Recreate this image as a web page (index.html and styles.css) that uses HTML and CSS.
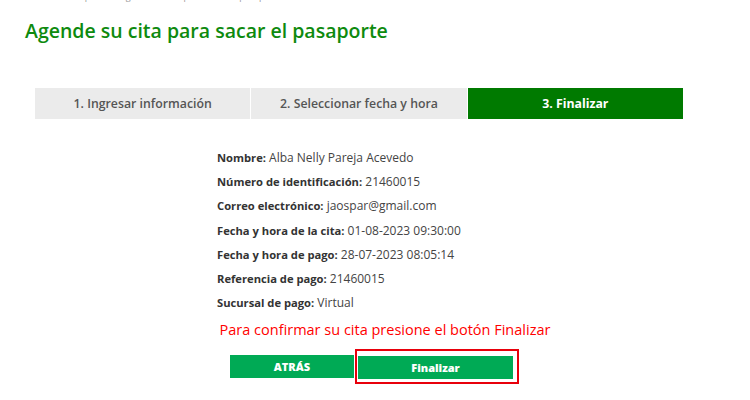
FILE: index.html
```html
<!DOCTYPE html>
<html lang="es">
<head>
<meta charset="utf-8">
<link rel="stylesheet" href="styles.css">
</head>
<body>
<div class="page">
  <div class="crumb">Inicio &nbsp;/&nbsp; Pasaporte &nbsp;/&nbsp; Agende su cita para sacar el pasaporte</div>
  <h1 class="title">Agende su cita para sacar el pasaporte</h1>
  <div class="steps">
    <div class="step">1. Ingresar información</div>
    <div class="step">2. Seleccionar fecha y hora</div>
    <div class="step active">3. Finalizar</div>
  </div>
  <div class="summary">
    <p class="row"><b>Nombre:</b> Alba Nelly Pareja Acevedo</p>
    <p class="row"><b>Número de identificación:</b> 21460015</p>
    <p class="row"><b>Correo electrónico:</b> jaospar@gmail.com</p>
    <p class="row"><b>Fecha y hora de la cita:</b> 01-08-2023 09:30:00</p>
    <p class="row"><b>Fecha y hora de pago:</b> 28-07-2023 08:05:14</p>
    <p class="row"><b>Referencia de pago:</b> 21460015</p>
    <p class="row"><b>Sucursal de pago:</b> Virtual</p>
  </div>
  <p class="notice">Para confirmar su cita presione el botón Finalizar</p>
  <div class="actions">
    <button class="btn back">ATRÁS</button>
    <div class="highlight"><button class="btn finish">Finalizar</button></div>
  </div>
</div>
</body>
</html>
```
FILE: styles.css
```css
html, body {
  margin: 0;
  padding: 0;
  background: #ffffff;
}
body {
  font-family: "Open Sans", "Liberation Sans", sans-serif;
  color: #444;
  width: 750px;
  height: 400px;
  overflow: hidden;
}
.page {
  display: flex;
  flex-direction: column;
}
.crumb {
  margin-top: -9px;
  height: 12px;
  padding-left: 30px;
  font-size: 9px;
  color: #999;
  line-height: 12px;
}
.title {
  margin: 14px 0 0 25px;
  font-size: 19.5px;
  font-weight: 600;
  color: #0e8a0e;
  line-height: 28px;
}
.steps {
  display: flex;
  gap: 1px;
  margin: 43px 0 0 35px;
  width: 648px;
}
.step {
  flex: 1;
  height: 31px;
  background: #ebebeb;
  color: #555;
  font-size: 12.3px;
  font-weight: 600;
  display: flex;
  align-items: center;
  justify-content: center;
}
.step.active {
  background: #007a00;
  color: #fff;
  font-weight: 700;
}
.summary {
  margin: 31px 0 0 217px;
  display: flex;
  flex-direction: column;
  gap: 8.2px;
}
.row {
  margin: 0;
  font-size: 12px;
  line-height: 16px;
  color: #444;
}
.row b {
  color: #333;
  font-weight: 700;
  font-size: 11.2px;
}
.notice {
  margin: 9px 0 0 0;
  width: 770px;
  text-align: center;
  font-size: 14.5px;
  color: #ff0000;
  line-height: 20px;
}
.actions {
  display: flex;
  align-items: center;
  margin: 9px 0 0 230px;
  gap: 1px;
}
.btn {
  border: 0;
  background: #00aa55;
  color: #fff;
  font-family: inherit;
  font-weight: 800;
  font-size: 11px;
  height: 23px;
  padding: 0;
  cursor: pointer;
}
.back {
  width: 124px;
}
.highlight {
  border: 2px solid #e8000b;
  padding: 5px 4px 3px 1px;
}
.finish {
  width: 155px;
  display: block;
}
```
